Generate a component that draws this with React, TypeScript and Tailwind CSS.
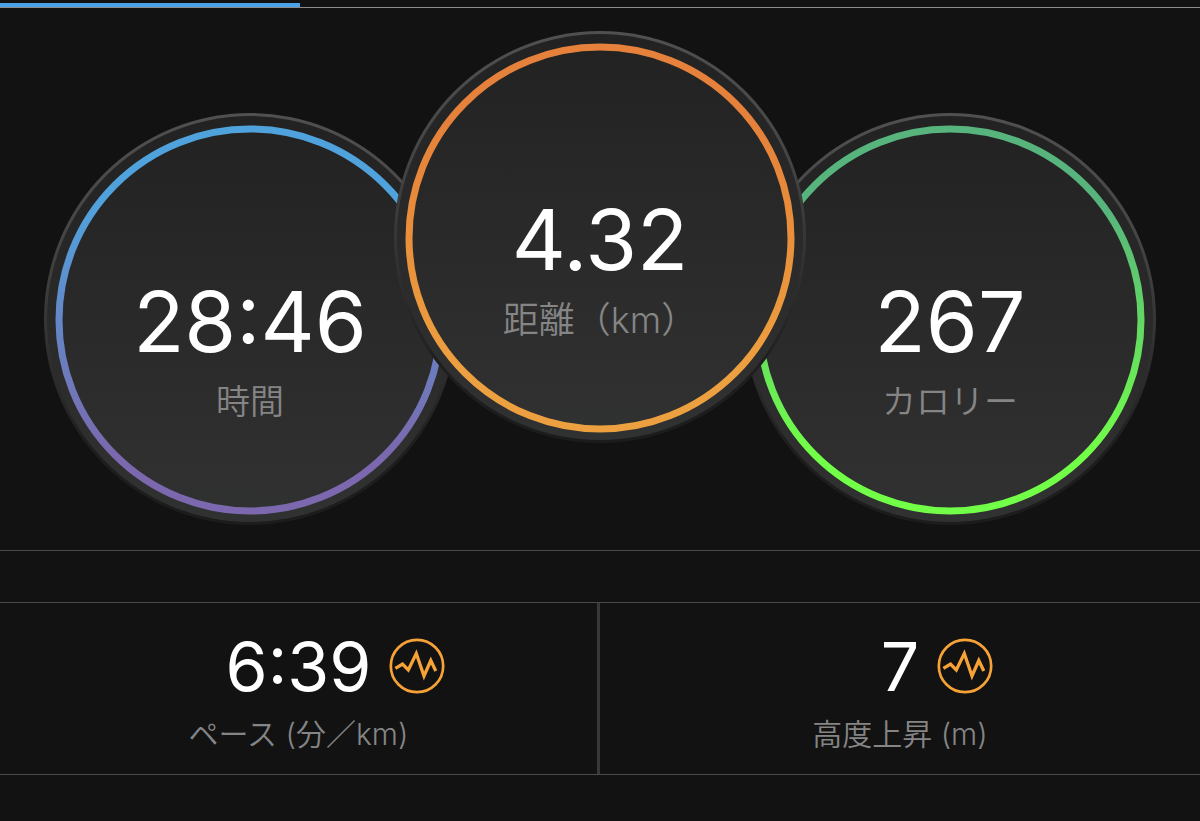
import clsx from "clsx";

type DialProps = {
  id: string;
  value: string;
  label: string;
  from: string;
  to: string;
  featured?: boolean;
};

const dials: DialProps[] = [
  { id: "time", value: "28:46", label: "時間", from: "#50a2dc", to: "#7b68ae" },
  {
    id: "distance",
    value: "4.32",
    label: "距離（km）",
    from: "#e5813a",
    to: "#eda03f",
    featured: true,
  },
  { id: "calories", value: "267", label: "カロリー", from: "#56b47c", to: "#72ff48" },
];

const stats = [
  { value: "6:39", label: "ペース (分／km)" },
  { value: "7", label: "高度上昇 (m)" },
];

function Dial({ id, value, label, from, to, featured }: DialProps) {
  return (
    <li
      className={clsx(
        "relative -mx-[31px] flex h-[412px] w-[412px] shrink-0 flex-col items-center pt-[167px]",
        featured ? "z-10" : "mt-[82px]",
      )}
    >
      <svg
        className="absolute inset-0 h-full w-full overflow-visible"
        viewBox="0 0 412 412"
        aria-hidden="true"
      >
        <defs>
          <linearGradient id={`${id}-ring`} x1="0" y1="0" x2="0" y2="1">
            <stop offset="0.2" stopColor={from} />
            <stop offset="0.85" stopColor={to} />
          </linearGradient>
          <linearGradient id={`${id}-face`} x1="0" y1="0" x2="0" y2="1">
            <stop offset="0" stopColor="#222222" />
            <stop offset="0.85" stopColor="#2f2f2f" />
            <stop offset="1" stopColor="#303131" />
          </linearGradient>
          <linearGradient id={`${id}-edge`} x1="0" y1="0" x2="0" y2="1">
            <stop offset="0" stopColor="#505050" />
            <stop offset="0.3" stopColor="#454545" />
            <stop offset="0.65" stopColor="#2b2b2b" />
            <stop offset="0.8" stopColor="#1f1f1f" />
            <stop offset="1" stopColor="#1c1c1c" />
          </linearGradient>
        </defs>
        <circle cx="206" cy="206" r="206" fill={`url(#${id}-edge)`} />
        <circle cx="206" cy="206" r="203" fill={`url(#${id}-face)`} />
        <circle
          cx="206"
          cy="207"
          r="191"
          fill="none"
          stroke={`url(#${id}-ring)`}
          strokeWidth="7"
        />
      </svg>
      <span className="relative text-[84px] leading-[84px] text-white">
        {value}
      </span>
      <span
        className={clsx(
          "relative mt-[18px] leading-10 font-[350] text-[#858585]",
          featured ? "text-[36px]" : "text-[34px]",
        )}
      >
        {label}
      </span>
    </li>
  );
}

function ChartIcon() {
  return (
    <svg className="h-14 w-14" viewBox="0 0 56 56" fill="none" stroke="#f7a237">
      <circle cx="28" cy="28" r="26.2" strokeWidth="2.7" />
      <path
        d="M6.4 30.4 13.5 26 19.3 32 27.3 15.5 35 38 41.8 22.5 46.8 33"
        strokeWidth="3.3"
      />
    </svg>
  );
}

export default function App() {
  return (
    <main
      lang="ja"
      className="min-h-screen overflow-x-hidden bg-[#121212] font-['Inter','Noto_Sans_CJK_JP',sans-serif]"
    >
      <div className="border-b border-[#8c8c8c] pt-[3px]">
        <div className="h-1 w-1/4 bg-[#4aa3e8]" />
      </div>

      <ul className="flex justify-center border-b border-[#4a4a4a] pt-[23px] pb-[25px]">
        {dials.map((dial) => (
          <Dial key={dial.id} {...dial} />
        ))}
      </ul>

      <ul className="mt-[51px] grid grid-cols-2 divide-x-3 divide-[#383838] border-y border-[#4a4a4a]">
        {stats.map(({ value, label }) => (
          <li
            key={label}
            className="flex flex-col items-center pt-[29px] pb-5"
          >
            <div className="grid w-full grid-cols-[1fr_auto_1fr] items-center gap-x-[18px]">
              <span className="col-start-2 text-[68px] leading-[68px] text-white">
                {value}
              </span>
              <button type="button" className="w-14" aria-label={label}>
                <ChartIcon />
              </button>
            </div>
            <span className="mt-[14px] text-[30px] leading-10 font-[350] text-[#858585]">
              {label}
            </span>
          </li>
        ))}
      </ul>
    </main>
  );
}
